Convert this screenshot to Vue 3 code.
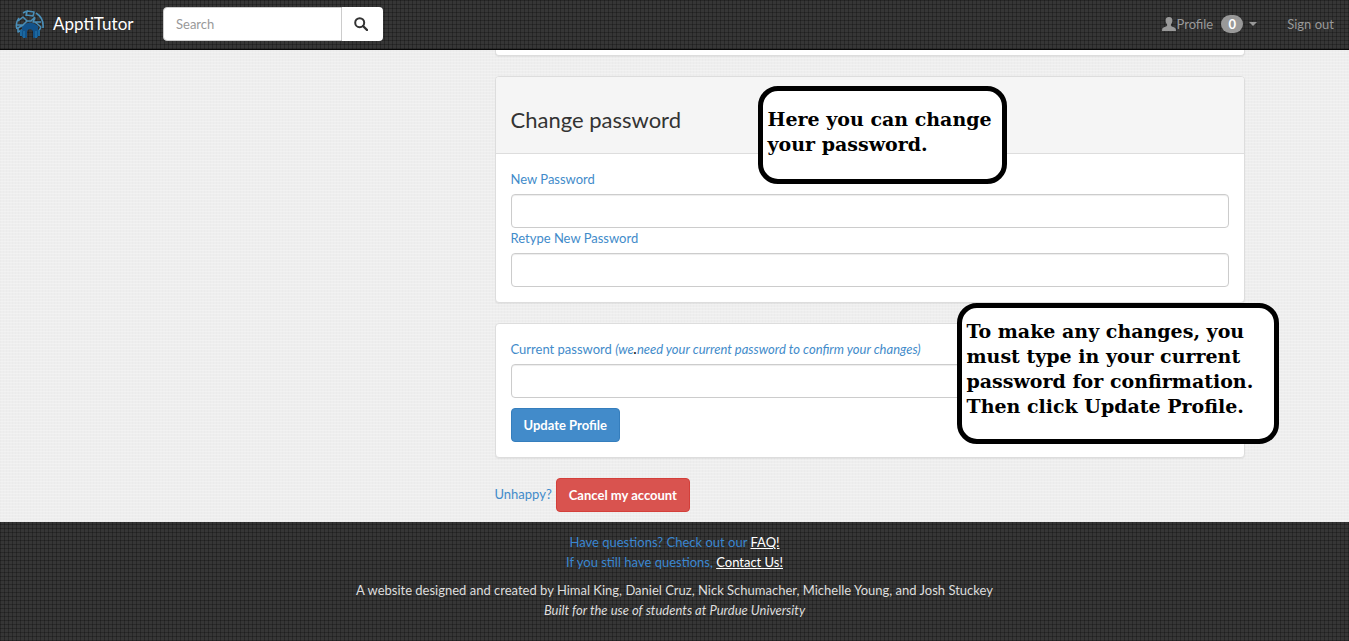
<script setup>
import { ref } from 'vue'

const query = ref('')
const newPassword = ref('')
const retypedPassword = ref('')
const currentPassword = ref('')
</script>

<template>
  <div class="page">
    <header class="navbar dark">
      <a class="brand" href="#">
        <svg class="logo" viewBox="0 0 30 30" aria-hidden="true">
          <path d="M7 28V17q8-7 16 0v11l-5 1v-7q-3-4-6 0v7z" fill="#12528a" />
          <path d="M2 20q-2-6 2-11M8 4q3-2 5-2M21 4q8 5 7 15M11 7l1-5 7 1-1 4-7-1M3 12l5-4 4 4-4 4-6 0M12 12l4 0 4-4M20 9l-2 4 8 0M20 13l6 5M8 16l-5 3 0 4 4-2M26 18l-2 4" fill="none" stroke="#4a8fb9" stroke-width="1.6" stroke-linejoin="round" />
          <path d="M6 21v6M24 21v6M9 22v7M21 22v7" stroke="#1c689f" stroke-width="2" />
        </svg>
        <span>ApptiTutor</span>
      </a>
      <form class="search" @submit.prevent>
        <input v-model="query" type="text" placeholder="Search" aria-label="Search" />
        <button type="submit" aria-label="Submit search">
          <svg viewBox="0 0 14 14" aria-hidden="true">
            <circle cx="5.7" cy="5.7" r="4.5" fill="none" stroke="#333" stroke-width="2" />
            <path d="M9 9l4 4" stroke="#333" stroke-width="2.4" stroke-linecap="round" />
          </svg>
        </button>
      </form>
      <nav class="menu">
        <a href="#" class="profile">
          <svg viewBox="0 0 14 14" aria-hidden="true">
            <path d="M7 0c2.400 0 3.500 1.500 3.400 3.700-.1 1.800-.9 2.700-1.500 3.700v1.400c.5.900 4.500 1.400 4.900 3.200l.2 2H0l.2-2c.4-1.800 4.400-2.300 4.900-3.200V7.400C4.500 6.400 3.700 5.500 3.600 3.700 3.500 1.500 4.600 0 7 0z" fill="#999" />
          </svg>
          <span>Profile</span>
          <span class="badge">0</span>
          <span class="caret"></span>
        </a>
        <a href="#">Sign out</a>
      </nav>
    </header>

    <main class="container">
      <div class="column">
        <section class="panel panel-end"></section>

        <section class="panel">
          <div class="panel-heading"><h2>Change password</h2></div>
          <div class="panel-body">
            <label for="new-password">New Password</label>
            <input id="new-password" v-model="newPassword" type="password" />
            <label for="retype-password">Retype New Password</label>
            <input id="retype-password" v-model="retypedPassword" type="password" />
          </div>
          <aside class="note note-top">Here you can change<br />your password.</aside>
        </section>

        <section class="panel">
          <form class="panel-body" @submit.prevent>
            <label for="current-password">Current password <i>(we<b>.</b>need your current password to confirm your changes)</i></label>
            <input id="current-password" v-model="currentPassword" type="password" />
            <button type="submit" class="btn btn-primary">Update Profile</button>
          </form>
          <aside class="note note-bottom">To make any changes, you<br />must type in your current<br />password for confirmation.<br />Then click Update Profile.</aside>
        </section>

        <div class="cancel">
          <span>Unhappy?</span>
          <button type="button" class="btn btn-danger">Cancel my account</button>
        </div>
      </div>
    </main>

    <footer class="footer dark">
      <p class="questions">Have questions? Check out our <a href="#">FAQ!</a><br />If you still have questions, <a href="#">Contact Us!</a></p>
      <p class="credits">A website designed and created by Himal King, Daniel Cruz, Nick Schumacher, Michelle Young, and Josh Stuckey<br /><i>Built for the use of students at Purdue University</i></p>
    </footer>
  </div>
</template>

<style>
body {
  margin: 0;
  background: #eee;
}
</style>

<style scoped>
* {
  box-sizing: border-box;
}
.page {
  display: flex;
  flex-direction: column;
  min-height: 100vh;
  font: 13px/20px Lato, "Open Sans", sans-serif;
  color: #428bca;
  background:
    repeating-linear-gradient(0deg, rgba(255, 255, 255, 0.25) 0 1px, transparent 1px 3px),
    repeating-linear-gradient(90deg, rgba(0, 0, 0, 0.01) 0 1px, transparent 1px 3px),
    #eee;
}
.dark {
  background:
    repeating-linear-gradient(0deg, rgba(0, 0, 0, 0.25) 0 1px, transparent 1px 4px),
    repeating-linear-gradient(90deg, rgba(0, 0, 0, 0.25) 0 1px, transparent 1px 4px),
    #363636;
}
.navbar {
  display: flex;
  align-items: center;
  height: 50px;
  padding: 0 15px 1px;
  border-bottom: 1px solid #080808;
}
.brand {
  display: flex;
  align-items: center;
  gap: 8px;
  width: 148px;
  color: #fff;
  font-size: 17px;
  text-decoration: none;
}
.logo {
  width: 30px;
  height: 30px;
}
.search {
  display: flex;
  width: 220px;
  height: 34px;
}
.search input {
  flex: 1;
  min-width: 0;
  padding: 0 12px;
  border: 1px solid #ccc;
  border-radius: 4px 0 0 4px;
  font: inherit;
}
.search input::placeholder {
  color: #999;
}
.search button {
  display: flex;
  align-items: center;
  width: 41px;
  padding: 0 12px;
  border: 0;
  border-radius: 0 4px 4px 0;
  background: #fff;
}
.search button svg {
  width: 14px;
  height: 14px;
}
.menu {
  display: flex;
  gap: 30px;
  margin-left: auto;
}
.menu a {
  color: #999;
  text-decoration: none;
}
.profile {
  display: flex;
  align-items: center;
}
.profile svg {
  width: 14px;
  height: 14px;
}
.badge {
  min-width: 22px;
  margin: 0 6px 0 8px;
  border-radius: 10px;
  background: #999;
  color: #fff;
  font-size: 13px;
  font-weight: 700;
  line-height: 18px;
  text-align: center;
}
.caret {
  border: 4px solid transparent;
  border-top-color: #999;
  border-bottom: 0;
}
.container {
  display: grid;
  grid-template-columns: 1fr 2fr;
  width: 100%;
  max-width: 1170px;
  margin: 0 auto;
}
.column {
  grid-column: 2;
  padding: 0 15px;
}
.panel {
  position: relative;
  margin-bottom: 20px;
  border: 1px solid #ddd;
  border-radius: 4px;
  background: #fff;
  box-shadow: 0 1px 1px rgba(0, 0, 0, 0.05);
}
.panel-end {
  height: 6px;
  border-top: 0;
  border-radius: 0 0 4px 4px;
}
.panel-heading {
  padding: 30px 15px 20px;
  border-bottom: 1px solid #ddd;
  border-radius: 3px 3px 0 0;
  background: #f5f5f5;
}
h2 {
  margin: 0;
  color: #333;
  font-size: 22px;
  font-weight: 400;
  line-height: 26px;
}
.panel-body {
  padding: 15px;
}
label {
  display: block;
  padding-bottom: 5px;
}
label b {
  color: #222;
}
.panel-body input {
  display: block;
  width: 100%;
  height: 34px;
  padding: 6px 12px;
  border: 1px solid #ccc;
  border-radius: 4px;
  box-shadow: inset 0 1px 1px rgba(0, 0, 0, 0.075);
  font: inherit;
}
.btn {
  height: 34px;
  padding: 0 12px;
  border: 1px solid;
  border-radius: 4px;
  color: #fff;
  font: inherit;
  font-weight: 700;
}
.btn-primary {
  margin-top: 10px;
  border-color: #357ebd;
  background: #428bca;
}
.btn-danger {
  border-color: #d43f3a;
  background: #d9534f;
}
.cancel {
  display: flex;
  align-items: center;
  gap: 4px;
  padding-bottom: 10px;
}
.cancel span {
  padding-bottom: 3px;
}
.note {
  position: absolute;
  z-index: 1;
  padding: 16px 5px;
  border: 5px solid #000;
  border-radius: 20px;
  background: #fff;
  color: #000;
  font: 700 19px/25px "DejaVu Serif", serif;
  white-space: nowrap;
}
.note-top {
  top: 9px;
  left: 262px;
  width: 249px;
  height: 98px;
}
.note-bottom {
  top: -21px;
  left: 461px;
  width: 322px;
  height: 141px;
  padding-top: 11px;
}
.footer {
  flex: 1;
  padding: 10px 15px 20px;
  text-align: center;
}
.footer p {
  margin: 0;
}
.questions {
  color: #3a86d0;
}
.questions a {
  color: #fff;
}
.footer .credits {
  margin-top: 8px;
  color: #ddd;
}
</style>
